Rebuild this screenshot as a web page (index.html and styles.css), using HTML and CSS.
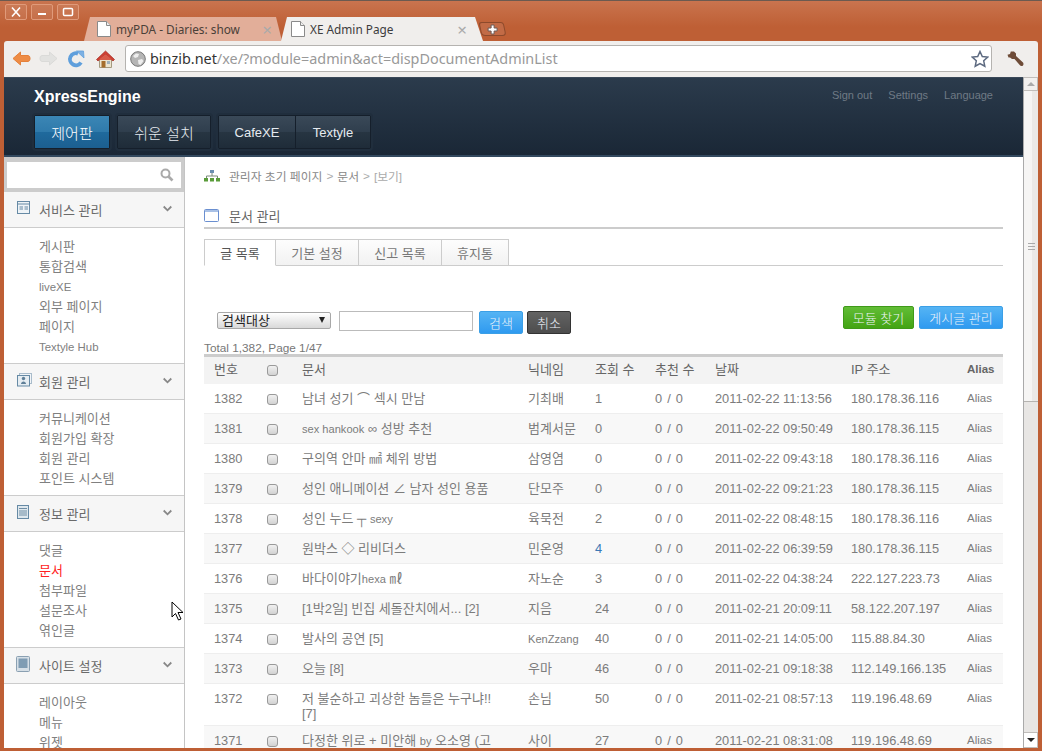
FILE: index.html
```html
<!DOCTYPE html>
<html lang="ko">
<head>
<meta charset="utf-8">
<title>XE Admin Page</title>
<link rel="stylesheet" href="styles.css">
</head>
<body>
<div class="window">
  <div class="titlebar">
    <div class="winbtns">
      <span class="winbtn"><svg width="14" height="12" viewBox="0 0 14 12"><path d="M3 1.500l8 9M11 1.500l-8 9" stroke="#fff" stroke-width="1.600" fill="none"/></svg></span>
      <span class="winbtn"><svg width="14" height="12" viewBox="0 0 14 12"><path d="M3 8h8" stroke="#fff" stroke-width="2" fill="none"/></svg></span>
      <span class="winbtn"><svg width="14" height="12" viewBox="0 0 14 12"><rect x="2.500" y="2.500" width="9" height="7" rx="1" stroke="#fff" stroke-width="1.500" fill="none"/></svg></span>
    </div>
    <div class="tabstrip">
      <div class="tab inactive">
        <svg class="fav" width="14" height="16" viewBox="0 0 14 16"><path d="M.5.5h9l4 4v11H.5z" fill="#fff" stroke="#8a8a8a"/><path d="M9.500.5v4h4" fill="#eee" stroke="#8a8a8a"/></svg>
        <span class="tabtitle">myPDA - Diaries: show</span>
        <span class="tabx">×</span>
      </div>
      <div class="tab active">
        <svg class="fav" width="14" height="16" viewBox="0 0 14 16"><path d="M.5.5h9l4 4v11H.5z" fill="#fff" stroke="#8a8a8a"/><path d="M9.500.5v4h4" fill="#eee" stroke="#8a8a8a"/></svg>
        <span class="tabtitle">XE Admin Page</span>
        <span class="tabx">×</span>
      </div>
      <div class="newtab"><svg width="11" height="11" viewBox="0 0 11 11"><path d="M4 1h3v3h3v3H7v3H4V7H1V4h3z" fill="#fff" stroke="#6d5a55"/></svg></div>
    </div>
  </div>
  <div class="toolbar">
    <svg class="navicon back" width="19" height="15" viewBox="0 0 19 15"><path d="M1 7.500L8.500 1v3.500H16a2.500 2.500 0 0 1 2 2.500v1a2.500 2.500 0 0 1-2 2.500H8.500V14z" fill="#ee8c45" stroke="#e4803a" stroke-linejoin="round"/></svg>
    <svg class="navicon fwd" width="19" height="15" viewBox="0 0 19 15"><path d="M18 7.500L10.500 1v3.500H3a2.500 2.500 0 0 0-2 2.500v1a2.500 2.500 0 0 0 2 2.500h7.500V14z" fill="#e2e2e0" stroke="#dadad8" stroke-linejoin="round"/></svg>
    <svg class="navicon reload" width="18" height="18" viewBox="0 0 18 18"><path d="M14 12.500A6 6 0 1 1 11 3.600" fill="none" stroke="#5f9fdc" stroke-width="3.800"/><path d="M9.500 1L16.500 1l.5 7z" fill="#7db1e4" stroke="#5f9fdc" stroke-width=".8"/></svg>
    <svg class="navicon home" width="19" height="18" viewBox="0 0 19 18"><path d="M3.500 8.500h12v9h-12z" fill="#ece4cf" stroke="#a59a80"/><path d="M9.500 1L.5 9.500l1.500 1.500 7.500-6.500 7.500 6.500 1.500-1.500z" fill="#cf3f33" stroke="#a02a20" stroke-width=".7"/><path d="M9.500 4.500L3.500 9v1h12V9z" fill="#d85a48"/><path d="M5.500 11h4v6.500h-4z" fill="#a56d2c"/><path d="M11 11h3v3h-3z" fill="#9fb0bb"/></svg>
    <div class="omnibox">
      <svg class="globe" width="16" height="16" viewBox="0 0 16 16"><circle cx="8" cy="8" r="7.300" fill="#b5b5b5" stroke="#777"/><path d="M3 5l3-2.500 3 .5-1 3-3 1zM8 9l4-1 1.500 2-3 4-2-1z" fill="#eee"/></svg>
      <span class="host">binzib.net</span><span class="urlpath">/xe/?module=admin&amp;act=dispDocumentAdminList</span>
      <svg class="star" width="18" height="18" viewBox="0 0 18 18"><path d="M9 1.500l2.300 5 5.400.600-4 3.700 1.100 5.400L9 13.500l-4.800 2.700 1.100-5.400-4-3.700 5.400-.600z" fill="#fff" stroke="#5d6a80" stroke-width="1.500"/></svg>
    </div>
    <svg class="wrench" width="18" height="16" viewBox="0 0 18 16"><path d="M.5 3.800L3 3l.8-2.500L7 .5 9 2.500 9 5l7 6.500c1 1.200.5 3.500-1.500 3.500-.7 0-1.300-.4-1.800-1L7.500 8H5L3 6.500H1.500z" fill="#6e4c38"/></svg>
  </div>
  <div class="viewport">
    <div class="page">
      <header class="adminhead">
        <div class="headtop">
          <h1 class="brand">XpressEngine</h1>
          <nav class="util"><a>Sign out</a><a>Settings</a><a>Language</a></nav>
        </div>
        <nav class="gnb">
          <span class="gnbgroup"><a class="gnbitem current ko">제어판</a></span>
          <span class="gnbgroup"><a class="gnbitem wide ko">쉬운 설치</a></span>
          <span class="gnbgroup"><a class="gnbitem">CafeXE</a><a class="gnbitem narrow">Textyle</a></span>
        </nav>
      </header>
      <div class="content">
        <aside class="sidebar">
          <div class="searchwrap">
            <div class="searchbox"><svg width="14" height="14" viewBox="0 0 14 14"><circle cx="5.500" cy="5.500" r="4" fill="none" stroke="#aaa" stroke-width="2"/><path d="M8.500 8.500l4 4" stroke="#aaa" stroke-width="2.600"/></svg></div>
          </div>
          <section class="snb">
            <h2 class="snbhead">
              <svg class="snbicon" width="14" height="14" viewBox="0 0 14 14"><rect x=".5" y=".5" width="12" height="12" fill="#eef3f7" stroke="#668aa5"/><path d="M1 3h11" stroke="#668aa5"/><path d="M2.500 5h3.500v4H2.500zM7.500 5H11v4H7.500z" fill="#a8bdcd"/></svg>
              <span>서비스 관리</span>
              <svg class="chev" width="9" height="7" viewBox="0 0 9 7"><path d="M.7 1.500l3.800 3.800 3.800-3.800" fill="none" stroke="#888" stroke-width="1.800"/></svg>
            </h2>
            <ul class="snblist"><li>게시판</li><li>통합검색</li><li class="lat">liveXE</li><li>외부 페이지</li><li>페이지</li><li class="lat">Textyle Hub</li></ul>
          </section>
          <section class="snb">
            <h2 class="snbhead">
              <svg class="snbicon" width="15" height="14" viewBox="0 0 15 14"><rect x="2.500" y=".5" width="12" height="10" fill="#f2f5f8" stroke="#a9bccb"/><rect x=".5" y="2.500" width="12" height="10.500" fill="#e6edf2" stroke="#668aa5"/><circle cx="6.500" cy="5.500" r="1.700" fill="#5f7f98"/><path d="M4 11c0-3.500 5-3.500 5 0z" fill="#5f7f98"/></svg>
              <span>회원 관리</span>
              <svg class="chev" width="9" height="7" viewBox="0 0 9 7"><path d="M.7 1.500l3.800 3.800 3.800-3.800" fill="none" stroke="#888" stroke-width="1.800"/></svg>
            </h2>
            <ul class="snblist"><li>커뮤니케이션</li><li>회원가입 확장</li><li>회원 관리</li><li>포인트 시스템</li></ul>
          </section>
          <section class="snb">
            <h2 class="snbhead">
              <svg class="snbicon" width="14" height="14" viewBox="0 0 14 14"><rect x=".5" y=".5" width="11" height="13" fill="#dfe8ee" stroke="#668aa5"/><path d="M2 3.500h8M2 6h8M2 8h8M2 10h8" stroke="#6f8ea5"/></svg>
              <span>정보 관리</span>
              <svg class="chev" width="9" height="7" viewBox="0 0 9 7"><path d="M.7 1.500l3.800 3.800 3.800-3.800" fill="none" stroke="#888" stroke-width="1.800"/></svg>
            </h2>
            <ul class="snblist"><li>댓글</li><li class="on">문서</li><li>첨부파일</li><li>설문조사</li><li>엮인글</li></ul>
          </section>
          <section class="snb">
            <h2 class="snbhead">
              <svg class="snbicon tablet" width="14" height="16" viewBox="0 0 14 16"><rect x=".5" y=".5" width="13" height="15" rx="1" fill="#d6dfe6" stroke="#8aa0b2"/><rect x="2.500" y="2.500" width="9" height="9.500" fill="#7f9cb3"/></svg>
              <span>사이트 설정</span>
              <svg class="chev" width="9" height="7" viewBox="0 0 9 7"><path d="M.7 1.500l3.800 3.800 3.800-3.800" fill="none" stroke="#888" stroke-width="1.800"/></svg>
            </h2>
            <ul class="snblist"><li>레이아웃</li><li>메뉴</li><li>위젯</li></ul>
          </section>
        </aside>
        <main class="main">
          <div class="crumb">
            <svg class="crumbicon" width="16" height="12" viewBox="0 0 16 12"><path d="M6 0h4v3H6z" fill="#6a8fb0"/><path d="M8 3v3M2.500 8V6h11v2" stroke="#7a8a7a" fill="none"/><path d="M0 8h4v3.500H0zM6 8h4v3.500H6zM12 8h4v3.500h-4z" fill="#5a9c3a"/></svg>
            <span>관리자 초기 페이지</span><i>&gt;</i><span>문서</span><i>&gt;</i><em>[보기]</em>
          </div>
          <div class="pagetitle">
            <svg width="15" height="13" viewBox="0 0 15 13"><rect x=".5" y=".5" width="14" height="12" rx="1" fill="#fff" stroke="#6a8fd0"/><path d="M1 2h13" stroke="#a9c1e6" stroke-width="2"/></svg>
            <h2>문서 관리</h2>
          </div>
          <ul class="tabs">
            <li class="tabitem current">글 목록</li><li class="tabitem">기본 설정</li><li class="tabitem">신고 목록</li><li class="tabitem">휴지통</li>
          </ul>
          <div class="filters">
            <div class="searchform">
              <div class="selectwrap"><select class="select"><option>검색대상</option></select><span class="selectarrow"></span></div>
              <input class="textinput" type="text">
              <button class="btn blue">검색</button>
              <button class="btn dark">취소</button>
            </div>
            <div class="actions">
              <button class="btn green">모듈 찾기</button>
              <button class="btn blue">게시글 관리</button>
            </div>
          </div>
          <p class="total">Total 1,382, Page 1/47</p>
          <table class="doctable">
            <colgroup><col class="c1"><col class="c2"><col class="c3"><col class="c4"><col class="c5"><col class="c6"><col class="c7"><col class="c8"><col class="c9"></colgroup>
            <thead><tr><th>번호</th><th><span class="check"></span></th><th>문서</th><th>닉네임</th><th>조회 수</th><th>추천 수</th><th>날짜</th><th>IP 주소</th><th class="alias">Alias</th></tr></thead>
            <tbody>
              <tr><td>1382</td><td><span class="check"></span></td><td>남녀 성기 ⌒ 섹시 만남</td><td>기최배</td><td>1</td><td>0 / 0</td><td>2011-02-22 11:13:56</td><td>180.178.36.116</td><td>Alias</td></tr>
              <tr><td>1381</td><td><span class="check"></span></td><td><span class="lat">sex hankook</span> ∞ 성방 추천</td><td>범계서문</td><td>0</td><td>0 / 0</td><td>2011-02-22 09:50:49</td><td>180.178.36.115</td><td>Alias</td></tr>
              <tr><td>1380</td><td><span class="check"></span></td><td>구의역 안마 ㎟ 체위 방법</td><td>삼영염</td><td>0</td><td>0 / 0</td><td>2011-02-22 09:43:18</td><td>180.178.36.116</td><td>Alias</td></tr>
              <tr><td>1379</td><td><span class="check"></span></td><td>성인 애니메이션 ∠ 남자 성인 용품</td><td>단모주</td><td>0</td><td>0 / 0</td><td>2011-02-22 09:21:23</td><td>180.178.36.115</td><td>Alias</td></tr>
              <tr><td>1378</td><td><span class="check"></span></td><td>성인 누드 ┬ <span class="lat">sexy</span></td><td>육묵전</td><td>2</td><td>0 / 0</td><td>2011-02-22 08:48:15</td><td>180.178.36.116</td><td>Alias</td></tr>
              <tr><td>1377</td><td><span class="check"></span></td><td>원박스 ◇ 리비더스</td><td>민온영</td><td class="num">4</td><td>0 / 0</td><td>2011-02-22 06:39:59</td><td>180.178.36.115</td><td>Alias</td></tr>
              <tr><td>1376</td><td><span class="check"></span></td><td>바다이야기<span class="lat">hexa</span> ㎖</td><td>자노순</td><td>3</td><td>0 / 0</td><td>2011-02-22 04:38:24</td><td>222.127.223.73</td><td>Alias</td></tr>
              <tr><td>1375</td><td><span class="check"></span></td><td>[1박2일] 빈집 세돌잔치에서... [2]</td><td>지음</td><td>24</td><td>0 / 0</td><td>2011-02-21 20:09:11</td><td>58.122.207.197</td><td>Alias</td></tr>
              <tr><td>1374</td><td><span class="check"></span></td><td>발사의 공연 [5]</td><td><span class="lat">KenZzang</span></td><td>40</td><td>0 / 0</td><td>2011-02-21 14:05:00</td><td>115.88.84.30</td><td>Alias</td></tr>
              <tr><td>1373</td><td><span class="check"></span></td><td>오늘 [8]</td><td>우마</td><td>46</td><td>0 / 0</td><td>2011-02-21 09:18:38</td><td>112.149.166.135</td><td>Alias</td></tr>
              <tr><td>1372</td><td><span class="check"></span></td><td>저 불순하고 괴상한 놈들은 누구냐!! [7]</td><td>손님</td><td>50</td><td>0 / 0</td><td>2011-02-21 08:57:13</td><td>119.196.48.69</td><td>Alias</td></tr>
              <tr><td>1371</td><td><span class="check"></span></td><td>다정한 위로 + 미안해 <span class="lat">by</span> 오소영 (고</td><td>사이</td><td>27</td><td>0 / 0</td><td>2011-02-21 08:31:08</td><td>119.196.48.69</td><td>Alias</td></tr>
            </tbody>
          </table>
        </main>
      </div>
    </div>
    <div class="scrollbar">
      <span class="sbbtn up"></span>
      <div class="sbtrack"><div class="sbthumb"><span class="grip"></span></div></div>
      <span class="sbbtn down"></span>
    </div>
  </div>
  <svg class="cursor" width="14" height="21" viewBox="0 0 14 21"><path d="M1 1v15l3.500-3.500 3 6.500 2.500-1-3-6.500h5z" fill="#fff" stroke="#000" stroke-width="1"/></svg>
</div>
</body>
</html>
```
FILE: styles.css
```css
* { box-sizing: border-box; }
html, body { margin: 0; padding: 0; height: 100%; overflow: hidden; }
body { font-family: "Liberation Sans", "Noto Sans CJK KR", sans-serif; font-size: 13px; color: #666; background: #fff; }
.window { position: relative; width: 1042px; height: 751px; display: flex; flex-direction: column; padding: 0 4px 3px 4px; background: #be5f35; border-top: 1px solid #6b5a50; overflow: hidden; }
.titlebar { position: relative; height: 40px; flex: none; margin: 0 -4px; background: linear-gradient(#c9744f, #c46a42 12px, #be5f35 26px); }
.winbtns { position: absolute; left: 5px; top: 3px; display: flex; gap: 4px; }
.winbtn { width: 22px; height: 16px; display: flex; align-items: center; justify-content: center; border: 1px solid #e09a7a; border-radius: 2px; background: rgba(255,255,255,.07); }
.tabstrip { position: absolute; left: 84px; top: 16px; display: flex; align-items: flex-end; height: 24px; }
.tab { width: 198px; height: 24px; display: flex; align-items: center; padding: 0 7px 0 13px; font-family: "Noto Sans", sans-serif; font-size: 11.800px; clip-path: polygon(0 100%, 6px 0, 192px 0, 198px 100%); }
.tab.inactive { background: #e2ae99; color: #4a4038; }
.tab.active { width: 202px; padding: 0 8px 0 10px; background: #f0eeec; color: #3c3c3c; margin-left: -1px; clip-path: polygon(0 100%, 6px 0, 194px 0, 202px 100%); }
.fav { flex: none; margin-right: 5px; }
.tabtitle { flex: 1; white-space: nowrap; }
.tabx { color: #aaa; font-size: 17px; line-height: 1; margin-right: 3px; }
.tab.active .tabx { margin-right: 8px; }
.newtab { width: 25px; height: 14px; margin: 0 0 5px -3px; display: flex; align-items: center; justify-content: center; background: #c26b46; border: 1px solid #8d4a2c; border-radius: 3px 3px 4px 4px; transform: skewX(12deg); }
.newtab svg { transform: skewX(-12deg); }
.toolbar { flex: none; height: 36px; display: flex; align-items: center; padding: 0 13px 1px 8px; background: #f0eeec; border-radius: 3px 3px 0 0; }
.navicon { flex: none; }
.navicon.back { margin-right: 8px; }
.navicon.fwd { margin-right: 9px; }
.navicon.reload { margin-right: 11px; }
.navicon.home { margin-right: 10px; }
.omnibox { flex: 1; height: 27px; margin: 0 15px 0 0; display: flex; align-items: center; padding: 0 2px 0 4px; background: #fff; border: 1px solid #b5b3b0; border-radius: 3px; font-family: "Noto Sans", sans-serif; font-size: 14.400px; white-space: nowrap; }
.globe { flex: none; margin-right: 4px; }
.host { color: #333; }
.urlpath { color: #999; flex: 1; }
.star { flex: none; }
.wrench { flex: none; }
.viewport { flex: 1; min-height: 0; display: flex; }
.page { flex: 1; min-width: 0; height: 100%; overflow: hidden; background: #fff; }
.adminhead { height: 80px; padding: 0 30px; background: linear-gradient(#2b3b4c, #1a2736); border-top: 1px solid #3a4858; border-bottom: 2px solid #33495f; }
.headtop { height: 37px; display: flex; justify-content: space-between; align-items: flex-start; }
.brand { margin: 9px 0 0; font-size: 16px; line-height: 19px; font-weight: bold; color: #fff; }
.util { display: flex; gap: 16px; margin-top: 10px; font-size: 11px; line-height: 14px; color: #6f7a85; }
.gnb { display: flex; gap: 7px; }
.gnbgroup { display: flex; padding: 0; border: 1px solid #151f2b; border-radius: 2px; background: #151f2b; box-shadow: 0 0 0 2px #202e3d; }
.gnbitem { height: 32px; width: 76px; display: flex; align-items: center; justify-content: center; font-size: 13px; color: #e6ebf0; background: linear-gradient(#3a4958, #2f3e4d 50%, #273542 50%, #1f2c39); border-left: 1px solid #151f2b; }
.gnbitem:first-child { border-left: 0; }
.gnbitem.ko { font-size: 15px; font-weight: 300; }
.gnbitem.current { width: 74px; background: linear-gradient(#3b86b5, #2f7aab 50%, #1f6a9d 50%, #1c5f90); color: #fff; }
.gnbitem.wide { width: 92px; }
.gnbitem.narrow { width: 75px; }
.content { display: flex; align-items: flex-start; }
.sidebar { flex: none; width: 181px; min-height: 600px; background: #fff; border-right: 1px solid #c4c4c4; }
.searchwrap { height: 34px; padding: 5px 3px; background: #ccc; }
.searchbox { height: 26px; display: flex; align-items: center; justify-content: flex-end; padding-right: 7px; background: #fff; }
.snb { margin: 0; }
.snbhead { height: 37px; margin: 0; padding: 0 12px 0 13px; display: flex; align-items: center; gap: 8px; background: #f6f6f6; border-top: 1px solid #ccc; border-bottom: 1px solid #ccc; font-size: 13px; font-weight: normal; color: #6a6a6a; }
.snbhead span { flex: 1; }
.snbicon { flex: none; margin-top: -3px; }
.snbicon.tablet { margin-left: -1px; margin-right: 1px; }
.snbhead .snbicon[width="15"] { margin-right: -1px; }
.chev { flex: none; margin-top: -3px; }
.snblist { list-style: none; margin: 0; padding: 9px 0 6px 35px; }
.snblist li { height: 20px; line-height: 20px; color: #808080; }
.snblist li.lat { font-size: 11.400px; }
.snblist li.on { color: #f22; }
.lat { font-size: 11.100px; }
.main { flex: 1; min-width: 0; padding: 0 20px 0 19px; }
.crumb { height: 31px; padding-top: 6px; display: flex; align-items: center; gap: 4px; color: #888; font-size: 11.800px; }
.crumbicon { margin-right: 5px; }
.crumb i { font-style: normal; color: #aaa; }
.crumb em { font-style: normal; color: #aaa; }
.pagetitle { height: 33px; margin-top: 8px; padding-top: 7px; display: flex; align-items: center; gap: 10px; border-bottom: 2px solid #ccc; }
.pagetitle h2 { margin: 0; font-size: 13px; font-weight: normal; color: #666; }
.tabs { list-style: none; display: flex; margin: 10px 0 0; padding: 0; height: 27px; border-bottom: 1px solid #ccc; }
.tabitem { width: 83px; height: 27px; display: flex; align-items: center; justify-content: center; background: linear-gradient(#fdfdfd, #f2f2f2); border: 1px solid #ccc; border-left: 0; color: #777; }
.tabitem.current { width: 72px; background: #fff; border-left: 1px solid #ccc; border-bottom: 1px solid #fff; color: #555; }
.tabitem:last-child { width: 67px; }
.filters { display: flex; justify-content: space-between; align-items: flex-start; height: 68px; padding-top: 40px; }
.searchform { display: flex; align-items: flex-start; margin-top: 5px; padding-left: 13px; }
.selectwrap { position: relative; width: 114px; height: 17px; margin-top: 1px; }
.select { appearance: none; display: block; width: 114px; height: 17px; padding: 0 4px; border: 1px solid #a8a8a8; border-radius: 2px; background: linear-gradient(#fff, #d9d9d9); font-family: "Liberation Sans", "Noto Sans CJK KR", sans-serif; font-size: 13px; line-height: 15px; color: #222; }
.selectarrow { position: absolute; right: 6px; top: 5px; border-left: 3.500px solid transparent; border-right: 3.500px solid transparent; border-top: 6px solid #222; }
.textinput { width: 134px; height: 20px; margin-left: 8px; border: 1px solid #bbb; background: #fff; padding: 0; }
.btn { height: 23px; padding: 0; border-radius: 2px; font-family: "Liberation Sans", "Noto Sans CJK KR", sans-serif; font-size: 13px; font-weight: 300; color: #eef4fa; }
.searchform .btn { width: 44px; margin-left: 6px; }
.searchform .btn.dark { margin-left: 4px; }
.actions { display: flex; gap: 5px; margin-top: 0; }
.btn.blue { background: linear-gradient(#55b4f4, #2f9af0); border: 1px solid #3b9fe6; }
.btn.dark { background: linear-gradient(#636363, #4d4d4d); border: 1px solid #333; }
.btn.green { width: 71px; background: linear-gradient(#62bd36, #43a414); border: 1px solid #3f9a19; }
.actions .btn.blue { width: 84px; }
.total { margin: 0; height: 20px; padding-top: 7px; line-height: 14px; font-size: 11.800px; color: #777; }
.doctable { width: 799px; table-layout: fixed; border-collapse: collapse; border-top: 3px solid #ccc; }
.c1 { width: 53px; } .c2 { width: 35px; } .c3 { width: 226px; } .c4 { width: 67px; } .c5 { width: 60px; } .c6 { width: 60px; } .c7 { width: 136px; } .c8 { width: 116px; } .c9 { width: 46px; }
.doctable th, .doctable td { padding: 5px 0 0 10px; vertical-align: top; text-align: left; font-size: 13px; line-height: 15px; color: #7c7c7c; }
.doctable th { height: 28px; padding-top: 5px; font-weight: normal; background: #f3f3f3; color: #666; }
.doctable th.alias { font-weight: bold; font-size: 11.500px; }
.doctable td { height: 30px; padding-top: 7px; padding-bottom: 4px; border-bottom: 1px solid #eee; }
.doctable td:nth-child(3) { padding-right: 15px; }
.doctable td:nth-child(1), .doctable td:nth-child(5), .doctable td:nth-child(6), .doctable td:nth-child(7), .doctable td:nth-child(8) { font-size: 12.800px; }
.doctable td:nth-child(6) { word-spacing: 1.500px; }
.doctable td:nth-child(9) { font-size: 11.500px; }
.doctable td.num { color: #3b78b5; }
.doctable tbody tr:nth-child(even) td { background: #f8f8f8; }
.check { display: block; width: 11px; height: 11px; margin-top: 3px; border: 1px solid #999; border-radius: 3px; background: linear-gradient(#f0f0f0, #d2d2d2); }
.scrollbar { flex: none; width: 15px; height: 100%; display: flex; flex-direction: column; border-left: 1px solid #aaa; background: #e8e6e4; }
.sbbtn { height: 14px; flex: none; display: flex; align-items: center; justify-content: center; background: #f2f0ee; border: 1px solid #c0bdba; border-left: 0; }
.sbbtn.up::before { content: ""; border-left: 4px solid transparent; border-right: 4px solid transparent; border-bottom: 4px solid #aaa; }
.sbbtn.down { background: #fff; height: 16px; }
.sbbtn.down::before { content: ""; border-left: 4px solid transparent; border-right: 4px solid transparent; border-top: 4px solid #222; }
.sbtrack { flex: 1; display: flex; flex-direction: column; }
.sbthumb { height: 311px; display: flex; align-items: center; justify-content: center; background: linear-gradient(90deg, #f6f5f4 60%, #ebe9e7 60%); border-bottom: 1px solid #b5b3b0; }
.grip { width: 7px; height: 7px; border-top: 1px solid #aaa; border-bottom: 1px solid #aaa; background: linear-gradient(transparent 2px, #aaa 2px, #aaa 3px, transparent 3px); }
.cursor { position: absolute; left: 171px; top: 600px; }
```
